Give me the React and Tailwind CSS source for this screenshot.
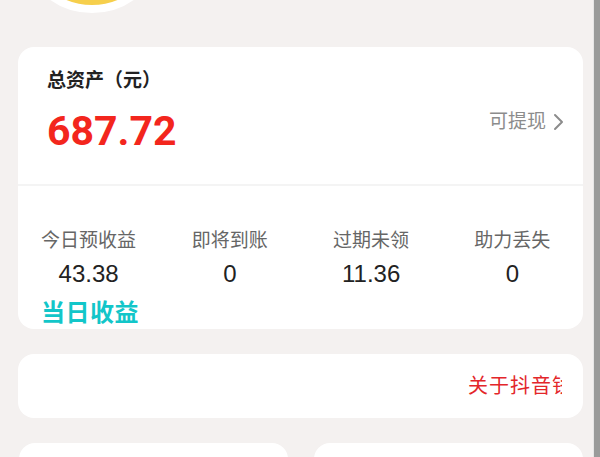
import React from 'react';

const stats = [
  { label: '今日预收益', value: '43.38' },
  { label: '即将到账', value: '0' },
  { label: '过期未领', value: '11.36' },
  { label: '助力丢失', value: '0' },
];

function App() {
  return (
    <div
      className="w-[600px] h-[457px] overflow-hidden flex bg-[#f4f1f0]"
      style={{ fontFamily: '"Noto Sans", "Noto Sans CJK SC", sans-serif' }}
    >
      <div className="flex-1 flex flex-col">
        {/* avatar peeking from the top */}
        <div className="h-[47px] shrink-0 relative">
          <div className="absolute left-[19px] top-[-133px] w-[146px] h-[146px] rounded-full border-8 border-white bg-[#f6cf4c]" />
        </div>

        {/* assets card */}
        <div className="shrink-0 ml-[18px] w-[565px] rounded-2xl bg-white overflow-hidden">
          <div className="h-[137px] pl-[29px] pr-[18px] pt-[20px] flex items-start justify-between">
            <div>
              <div className="text-[19px] font-bold text-[#222] leading-[26px]">总资产（元）</div>
              <div
                className="mt-[14px] text-[41px] font-bold text-[#f3261d] leading-[48px]"
                style={{ fontFamily: 'Roboto, "Noto Sans", sans-serif' }}
              >
                687.72
              </div>
            </div>
            <div className="flex items-center gap-[7px] text-[#8c8c8c] mt-[41px] h-[27px]">
              <span className="text-[19px] leading-[27px]">可提现</span>
              <svg width="12" height="20" viewBox="0 0 12 20" fill="none">
                <path d="M2 3l7 7-7 7" stroke="#8c8c8c" strokeWidth="2" strokeLinecap="round" strokeLinejoin="round" />
              </svg>
            </div>
          </div>
          <div className="h-[2px] bg-[#f4f4f4]" />
          <div className="h-[143px] pt-[41px]">
            <div className="grid grid-cols-4">
              {stats.map((s) => (
                <div key={s.label} className="flex flex-col items-center">
                  <span className="text-[19px] text-[#666] leading-[26px]">{s.label}</span>
                  <span
                    className="mt-[7px] text-[24px] text-[#222] leading-[28px]"
                    style={{ fontFamily: '"Liberation Sans", sans-serif' }}
                  >
                    {s.value}
                  </span>
                </div>
              ))}
            </div>
            <div className="ml-[23px] mt-[9px] text-[24px] font-bold text-[#12c6c9] leading-[30px] tracking-[0.5px]">
              当日收益
            </div>
          </div>
        </div>

        {/* notice card */}
        <div className="shrink-0 ml-[18px] mt-[25px] w-[565px] h-[64px] rounded-2xl bg-white flex items-center justify-end pr-[21px]">
          <div className="w-[94px] overflow-hidden whitespace-nowrap text-[20px] tracking-[1px] text-[#e3262a]">
            关于抖音钱包
          </div>
        </div>

        {/* bottom cards */}
        <div className="shrink-0 ml-[19px] mt-[25px] w-[564px] flex gap-[26px]">
          <div className="flex-1 h-[80px] rounded-2xl bg-white" />
          <div className="flex-1 h-[80px] rounded-2xl bg-white" />
        </div>
      </div>

      {/* scrollbar stripe */}
      <div className="w-[7px] h-full flex">
        <div className="w-[1px] bg-[#e6e6e6]" />
        <div className="flex-1 bg-[#9a9b9a]" />
      </div>
    </div>
  );
}

export default App;
